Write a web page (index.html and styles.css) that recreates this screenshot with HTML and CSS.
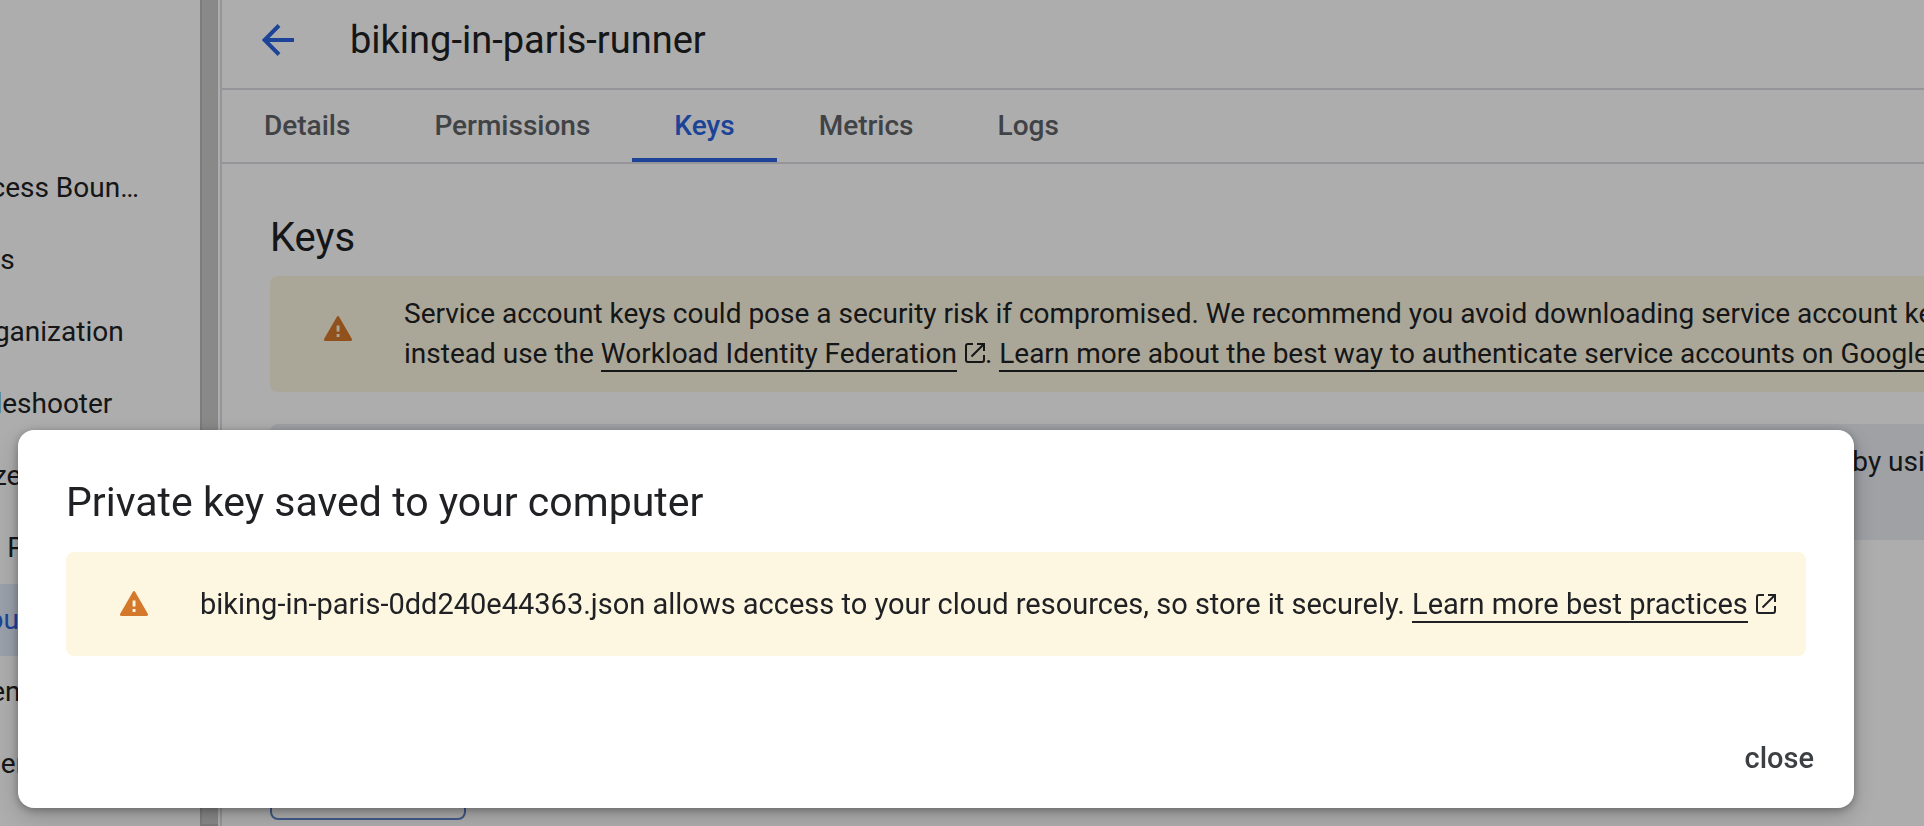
FILE: index.html
```html
<!DOCTYPE html>
<html lang="en">
<head>
<meta charset="utf-8">
<title>biking-in-paris-runner – Keys</title>
<link rel="stylesheet" href="styles.css">
</head>
<body>
<svg class="defs" aria-hidden="true">
  <symbol id="warning" viewBox="0 0 28 25">
    <path fill-rule="evenodd" d="M12.9.7a1.3 1.3 0 0 1 2.2 0L27.8 22.8A1.4 1.4 0 0 1 26.600 25H1.400A1.400 1.400 0 0 1 .2 22.800zM12.600 9.500v6h2.900v-6zM12.600 18v2.900h2.900V18z"/>
  </symbol>
  <symbol id="external" viewBox="0 0 20 20">
    <path fill="none" stroke="currentColor" stroke-width="2" d="M8 1H3a2 2 0 0 0-2 2v14a2 2 0 0 0 2 2h14a2 2 0 0 0 2-2v-5M12 1h7v7M19 1 6.500 13.500"/>
  </symbol>
</svg>

<div class="app">
  <nav class="sidebar" aria-label="IAM">
    <ul class="nav">
      <li><a class="nav-item" href="#">Principal Access Boun…</a></li>
      <li><a class="nav-item" href="#">Organizations</a></li>
      <li><a class="nav-item" href="#">Identity &amp; Organization</a></li>
      <li><a class="nav-item" href="#">Policy Troubleshooter</a></li>
      <li><a class="nav-item" href="#">Policy Analyzer</a></li>
      <li><a class="nav-item" href="#">Organization Policies</a></li>
      <li><a class="nav-item selected" href="#" aria-current="page">Service Accounts</a></li>
      <li><a class="nav-item" href="#">Workload Identity</a></li>
      <li><a class="nav-item" href="#">Workforce Identity</a></li>
    </ul>
  </nav>
  <div class="track"></div>
  <main class="main">
    <header class="header">
      <button class="back" aria-label="Back">
        <svg class="back-icon" viewBox="0 0 32 32" aria-hidden="true"><path d="M32 16H3M17 1.500 2.500 16 17 30.500"/></svg>
      </button>
      <h1 class="title">biking-in-paris-runner</h1>
    </header>
    <nav class="tabs" aria-label="Service account">
      <a class="tab" href="#">Details</a>
      <a class="tab" href="#">Permissions</a>
      <a class="tab active" href="#" aria-current="page">Keys</a>
      <a class="tab" href="#">Metrics</a>
      <a class="tab" href="#">Logs</a>
    </nav>
    <section class="content">
      <h2 class="heading">Keys</h2>
      <div class="banner banner-warning">
        <svg class="warning-icon" aria-hidden="true"><use href="#warning"/></svg>
        <p class="banner-text">Service account keys could pose a security risk if compromised. We recommend you avoid downloading service account keys and<br>instead use the <a class="link" href="#">Workload Identity Federation</a><svg class="external-icon" aria-hidden="true"><use href="#external"/></svg>. <a class="link" href="#">Learn more about the best way to authenticate service accounts on Google Cloud</a></p>
      </div>
      <div class="banner banner-info">
        <p class="banner-text info-text">by using</p>
      </div>
      <button class="add-key" aria-label="Add key"></button>
    </section>
  </main>
</div>

<div class="scrim">
  <div class="dialog" role="dialog" aria-modal="true" aria-labelledby="dialog-title">
    <h2 class="dialog-title" id="dialog-title">Private key saved to your computer</h2>
    <div class="banner dialog-banner">
      <svg class="warning-icon" aria-hidden="true"><use href="#warning"/></svg>
      <p class="banner-text">biking-in-paris-0dd240e44363.json allows access to your cloud resources, so store it securely. <a class="link" href="#">Learn more best practices</a><svg class="external-icon" aria-hidden="true"><use href="#external"/></svg></p>
    </div>
    <div class="actions"><button class="close">close</button></div>
  </div>
</div>
</body>
</html>
```
FILE: styles.css
```css
* {
  box-sizing: border-box;
}

body {
  margin: 0;
  height: 100vh;
  overflow: hidden;
  background: #fff;
  color: #202124;
  font: 28px/40px Roboto, "Liberation Sans", sans-serif;
}

h1, h2, p, ul {
  margin: 0;
  padding: 0;
  font-weight: 400;
}

button {
  padding: 0;
  border: 0;
  background: none;
  font: inherit;
  cursor: pointer;
}

.defs {
  position: absolute;
  width: 0;
  height: 0;
}

.app {
  display: flex;
  height: 100%;
}

/* Sidebar */
.sidebar {
  flex: 0 0 200px;
  overflow: hidden;
  padding-top: 152px;
}

.nav {
  margin-left: -158px;
  list-style: none;
}

.nav-item {
  display: block;
  color: inherit;
  line-height: 72px;
  text-decoration: none;
  white-space: nowrap;
}

.nav-item.selected {
  background: #e3ebfb;
  color: #2c64e1;
}

.track {
  flex: 0 0 18px;
  margin-right: 2px;
  border-left: 2px solid #b8b8b8;
  border-bottom: 2px solid #b8b8b8;
  background: #cacaca;
}

/* Main column */
.main {
  flex: 1;
  min-width: 0;
  overflow: hidden;
  border-left: 2px solid #dcdce4;
}

.header {
  display: flex;
  align-items: center;
  gap: 56px;
  height: 90px;
  padding: 0 40px 8px;
  border-bottom: 2px solid #dcdce4;
}

.back {
  display: flex;
}

.back-icon {
  width: 32px;
  height: 32px;
  fill: none;
  stroke: #2c64e1;
  stroke-width: 4;
}

.title {
  font-size: 38px;
  line-height: 48px;
}

.tabs {
  display: flex;
  height: 74px;
  border-bottom: 2px solid #dcdce4;
}

.tab {
  padding: 0 42px;
  border-bottom: 4px solid transparent;
  color: #5f6368;
  font-weight: 500;
  line-height: 72px;
  text-decoration: none;
}

.tab.active {
  border-color: #2c64e1;
  color: #2c64e1;
}

.content {
  padding: 50px 0 0 48px;
}

.heading {
  margin-bottom: 14px;
  font-size: 40px;
  line-height: 48px;
}

/* Banners */
.banner {
  display: flex;
  align-items: flex-start;
  gap: 52px;
  padding: 18px 54px;
  border-radius: 8px;
  white-space: nowrap;
}

.content .banner {
  width: 1800px;
  min-height: 116px;
  margin-bottom: 32px;
}

.banner-warning,
.dialog-banner {
  background: #fdf6e0;
}

.banner-info {
  background: #ebedf4;
}

.info-text {
  margin-left: auto;
  margin-right: 60px;
}

.warning-icon {
  flex: none;
  width: 28px;
  height: 25px;
  margin-top: 22px;
  fill: #d4782c;
}

.link {
  border-bottom: 2px solid #202124;
  color: inherit;
  text-decoration: none;
}

.external-icon {
  width: 20px;
  height: 20px;
  margin-left: 8px;
}

.add-key {
  display: block;
  width: 196px;
  height: 72px;
  margin-top: 208px;
  border: 2px solid #5f84c9;
  border-radius: 8px;
}

/* Dialog */
.scrim {
  position: fixed;
  inset: 0;
  padding: 430px 70px 0 18px;
  background: rgba(0, 0, 0, .32);
}

.dialog {
  padding: 48px 48px 14px;
  border-radius: 16px;
  background: #fff;
  box-shadow: 0 8px 24px rgba(0, 0, 0, .2), 0 2px 8px rgba(0, 0, 0, .3);
}

.dialog-title {
  margin-bottom: 26px;
  font-size: 41px;
  line-height: 48px;
}

.dialog-banner {
  padding-block: 32px;
  font-size: 29px;
}

.dialog-banner .warning-icon {
  margin-top: 7px;
}

.actions {
  display: flex;
  justify-content: flex-end;
  padding-top: 66px;
}

.close {
  height: 72px;
  margin-right: -8px;
  color: #3c4043;
  font-size: 29px;
  font-weight: 500;
}
```
